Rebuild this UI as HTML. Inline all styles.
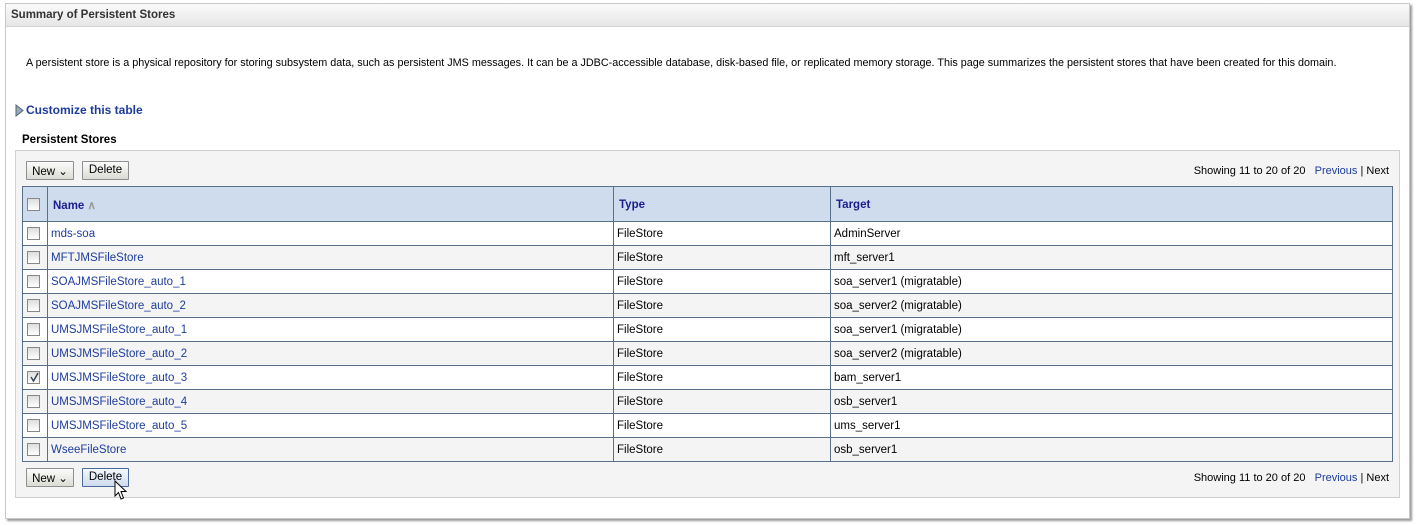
<!DOCTYPE html>
<html><head><meta charset="utf-8"><style>
*{box-sizing:border-box;margin:0;padding:0}
body{width:1419px;height:526px;background:#fff;position:relative;font-family:"Liberation Sans",sans-serif;font-size:11.5px;color:#000;overflow:hidden}
.panel{position:absolute;left:5px;top:3px;width:1405px;height:516px;border:1px solid #c8c8c8;background:#fff;box-shadow:2px 2px 2px #999}
.hdr{position:absolute;left:0;top:0;right:0;height:23px;background:linear-gradient(#fafafa,#e6e6e6);border-bottom:1px solid #d4d4d4;font-weight:bold;font-size:11.5px;color:#333;padding:5px 0 0 5px}
.a{position:absolute;white-space:nowrap}
.box{position:absolute;left:15px;top:150px;width:1385px;height:348px;background:#f4f4f4;border:1px solid #d0d0d0}
.btn{position:absolute;height:19px;border:1px solid #8f8f8f;background:linear-gradient(#fbfbfb,#dcdcd4);font-size:11.5px;padding:2px 0 0;text-align:center;border-radius:1px}
table{position:absolute;left:22px;top:186px;width:1371px;border-collapse:collapse;border:1px solid #5a6f8a}
td,th{border:1px solid #5a6f8a;height:24px;text-align:left;padding:1px 3px 0;font-weight:normal;font-size:11.5px;white-space:nowrap}
th{height:35px;background:#cfdcee;color:#1c1c8c;font-weight:bold;padding:1px 5px 0}
tr:nth-child(odd) td{background:#f4f4f4}
tr:nth-child(even) td{background:#fff}
.cb{display:inline-block;width:13px;height:13px;border:1px solid #888;background:linear-gradient(#ddd,#fff);vertical-align:middle;position:relative}
.lk{color:#1e3c9c}
.pg{position:absolute;right:30px;white-space:nowrap;font-size:11px}
</style></head><body>
<div class="panel">
<div class="hdr">Summary of Persistent Stores</div>
</div>
<div class="a" style="left:26px;top:57px;font-size:10.8px">A persistent store is a physical repository for storing subsystem data, such as persistent JMS messages. It can be a JDBC-accessible database, disk-based file, or replicated memory storage. This page summarizes the persistent stores that have been created for this domain.</div>
<svg class="a" style="left:15px;top:104px" width="9" height="13"><path d="M1 1 L8 6.5 L1 12 Z" fill="#9ab" stroke="#567" stroke-width="1"/></svg>
<div class="a" style="left:26px;top:103px;font-weight:bold;font-size:12px;color:#1e3c9c">Customize this table</div>
<div class="a" style="left:22px;top:134px;font-weight:bold;font-size:11.5px">Persistent Stores</div>
<div class="box"></div>
<div class="btn" style="left:26px;top:161px;width:48px">New ⌄</div>
<div class="btn" style="left:82px;top:161px;width:47px">Delete</div>
<div class="pg" style="top:165px">Showing 11 to 20 of 20 &nbsp;&nbsp;<span class="lk">Previous</span> | Next</div>
<table>
<tr><th style="width:25px;padding:0 4px"><span class="cb"></span></th><th style="width:566px">Name <span style="color:#999">&#x2227;</span></th><th style="width:217px">Type</th><th>Target</th></tr>
<tr><td style="padding:0 4px"><span class="cb"></span></td><td class="lk">mds-soa</td><td>FileStore</td><td>AdminServer</td></tr>
<tr><td style="padding:0 4px"><span class="cb"></span></td><td class="lk">MFTJMSFileStore</td><td>FileStore</td><td>mft_server1</td></tr>
<tr><td style="padding:0 4px"><span class="cb"></span></td><td class="lk">SOAJMSFileStore_auto_1</td><td>FileStore</td><td>soa_server1 (migratable)</td></tr>
<tr><td style="padding:0 4px"><span class="cb"></span></td><td class="lk">SOAJMSFileStore_auto_2</td><td>FileStore</td><td>soa_server2 (migratable)</td></tr>
<tr><td style="padding:0 4px"><span class="cb"></span></td><td class="lk">UMSJMSFileStore_auto_1</td><td>FileStore</td><td>soa_server1 (migratable)</td></tr>
<tr><td style="padding:0 4px"><span class="cb"></span></td><td class="lk">UMSJMSFileStore_auto_2</td><td>FileStore</td><td>soa_server2 (migratable)</td></tr>
<tr><td style="padding:0 4px"><span class="cb"><svg style="position:absolute;left:1px;top:0" width="11" height="11"><path d="M2 5 L4.5 9 L9 1" stroke="#345" stroke-width="1.5" fill="none"/></svg></span></td><td class="lk">UMSJMSFileStore_auto_3</td><td>FileStore</td><td>bam_server1</td></tr>
<tr><td style="padding:0 4px"><span class="cb"></span></td><td class="lk">UMSJMSFileStore_auto_4</td><td>FileStore</td><td>osb_server1</td></tr>
<tr><td style="padding:0 4px"><span class="cb"></span></td><td class="lk">UMSJMSFileStore_auto_5</td><td>FileStore</td><td>ums_server1</td></tr>
<tr><td style="padding:0 4px"><span class="cb"></span></td><td class="lk">WseeFileStore</td><td>FileStore</td><td>osb_server1</td></tr>
</table>
<div class="btn" style="left:26px;top:468px;width:48px">New ⌄</div>
<div class="btn" style="left:82px;top:468px;width:47px;border-color:#4a6a9a;background:linear-gradient(#f4f8fc,#cfdcee)">Delete</div>
<svg class="a" style="left:114px;top:480px" width="14" height="21"><path d="M1 1 L1 16 L4.5 12.5 L7 19 L9.5 18 L7 11.5 L12 11.5 Z" fill="#fff" stroke="#000" stroke-width="1"/></svg>
<div class="pg" style="top:472px">Showing 11 to 20 of 20 &nbsp;&nbsp;<span class="lk">Previous</span> | Next</div>
</body></html>
